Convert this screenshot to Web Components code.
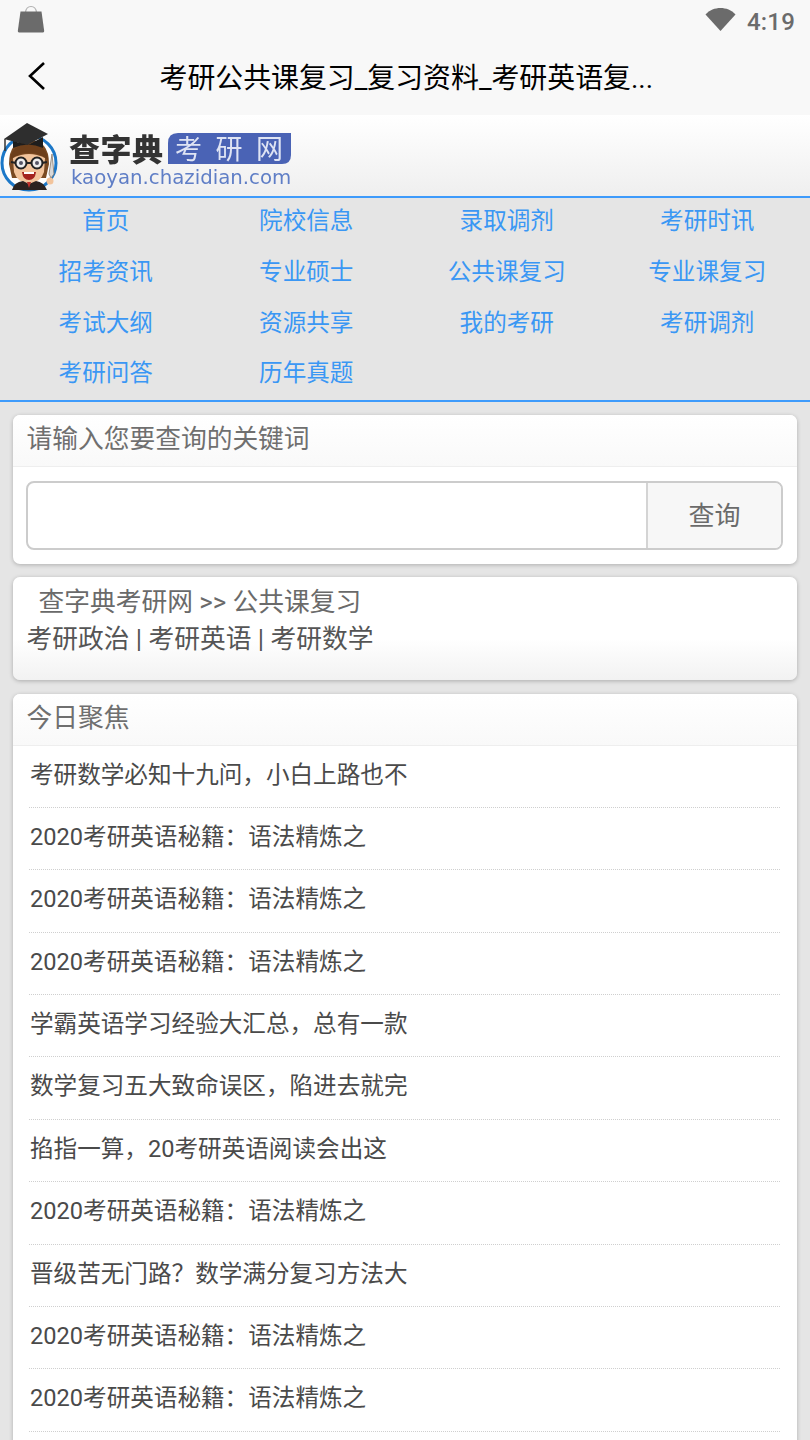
<!DOCTYPE html>
<html lang="zh">
<head>
<meta charset="utf-8">
<title>考研公共课复习</title>
<style>
  html, body { margin: 0; padding: 0; height: 1440px; overflow: hidden; }
  body {
    background: #e5e5e5;
    font-family: Roboto, "Noto Sans CJK SC", sans-serif;
    font-size: 23.6px;
  }
</style>
</head>
<body>
<app-bar title="考研公共课复习_复习资料_考研英语复..."></app-bar>
<logo-header></logo-header>
<nav-grid>
  <a>首页</a><a>院校信息</a><a>录取调剂</a><a>考研时讯</a>
  <a>招考资讯</a><a>专业硕士</a><a>公共课复习</a><a>专业课复习</a>
  <a>考试大纲</a><a>资源共享</a><a>我的考研</a><a>考研调剂</a>
  <a>考研问答</a><a>历年真题</a>
</nav-grid>
<main-column>
  <info-card heading="请输入您要查询的关键词"><search-box></search-box></info-card>
  <crumb-card>
    <div class="first">查字典考研网 &gt;&gt; 公共课复习</div>
    <div class="second">考研政治 | 考研英语 | 考研数学</div>
  </crumb-card>
  <info-card heading="今日聚焦">
    <list-row>考研数学必知十九问，小白上路也不</list-row>
    <list-row>2020考研英语秘籍：语法精炼之</list-row>
    <list-row>2020考研英语秘籍：语法精炼之</list-row>
    <list-row>2020考研英语秘籍：语法精炼之</list-row>
    <list-row>学霸英语学习经验大汇总，总有一款</list-row>
    <list-row>数学复习五大致命误区，陷进去就完</list-row>
    <list-row>掐指一算，20考研英语阅读会出这</list-row>
    <list-row>2020考研英语秘籍：语法精炼之</list-row>
    <list-row>晋级苦无门路？数学满分复习方法大</list-row>
    <list-row>2020考研英语秘籍：语法精炼之</list-row>
    <list-row>2020考研英语秘籍：语法精炼之</list-row>
    <list-row></list-row>
  </info-card>
</main-column>

<script>
const define = (name, html) => {
  customElements.define(name, class extends HTMLElement {
    constructor() {
      super();
      this.attachShadow({mode: 'open'}).innerHTML = html;
    }
    connectedCallback() {
      const t = this.shadowRoot.querySelector('[data-title]');
      if (t) t.textContent = this.getAttribute('title') || this.getAttribute('heading') || '';
    }
  });
};

define('app-bar', `
  <style>
    :host { display: block; height: 115px; background: #f8f8f8; }
    .status { height: 43px; display: flex; align-items: center; padding: 0 15px 0 17px; }
    .status svg { display: block; margin-top: -6px; }
    .wifi { margin-left: auto; margin-right: 11px; }
    .time { color: #6b6b6b; font: 500 24px Roboto, sans-serif; letter-spacing: .2px; }
    .bar { height: 72px; display: flex; align-items: center; position: relative; }
    .back { margin-left: 26px; display: block; margin-top: -6px; }
    .title {
      position: absolute; left: 159.5px; top: 16px;
      color: #000; font-size: 27.9px; line-height: 40px;
      white-space: nowrap;
    }
  </style>
  <div class="status">
    <svg class="bag" width="28" height="28" viewBox="0 0 28 28">
      <path d="M8.5 7.5C9 3 11 1.5 14 1.5S19 3 19.5 7.5" fill="none" stroke="#b0b0b0" stroke-width="1.2"/>
      <path d="M3.5 6.5h21l2.7 19.6q.1 1.4-1.2 1.4H2q-1.3 0-1.2-1.4z" fill="#6b6b6b"/>
    </svg>
    <svg class="wifi" width="31" height="24" viewBox="0 0 31 24">
      <path d="M0.5 7.5C4.5 3 10 1 15.5 1S26.5 3 30.5 7.5L15.5 24z" fill="#6b6b6b"/>
    </svg>
    <span class="time">4:19</span>
  </div>
  <div class="bar">
    <svg class="back" width="20" height="32" viewBox="0 0 20 32">
      <path d="M18 3L4 16l14 13" fill="none" stroke="#000" stroke-width="2.6"/>
    </svg>
    <div class="title" data-title></div>
  </div>
`);

define('logo-header', `
  <style>
    :host {
      display: block; height: 81px; box-sizing: border-box; padding-top: 5px;
      background: linear-gradient(#fff, #efefef);
    }
    svg { display: block; filter: blur(.5px); }
    text { font-family: "Noto Sans CJK SC", sans-serif; }
    .url { font-family: "DejaVu Sans", sans-serif; }
  </style>
  <svg width="295" height="72" viewBox="0 0 295 72">
    <circle cx="29" cy="43" r="27" fill="#fff" stroke="#1c78c8" stroke-width="3"/>
    <path d="M9 44q0-24 20-24t20 24l-3 14H12z" fill="#7a4a22"/>
    <path d="M13 38q16-8 32 0l-1 14q-3 10-15 12q-12-2-15-12z" fill="#f2c49c"/>
    <path d="M10 40q1-15 19-16q18 1 19 16q-9-8-19-7q-10-1-19 7z" fill="#6d3f1b"/>
    <circle cx="21" cy="43" r="5.5" fill="#eee" stroke="#222" stroke-width="2"/>
    <circle cx="37" cy="43" r="5.5" fill="#eee" stroke="#222" stroke-width="2"/>
    <path d="M26 43h6M11 42l5 1M42 43l5-1" stroke="#222" stroke-width="2"/>
    <circle cx="21" cy="43" r="2" fill="#556"/><circle cx="37" cy="43" r="2" fill="#556"/>
    <path d="M22 52h14q-1 8-7 8t-7-8z" fill="#a3231f"/>
    <path d="M24 52h10v2h-10z" fill="#fff"/>
    <path d="M12 70q2-8 11-9l6 3 7-3q8 1 11 9z" fill="#2b2320"/>
    <path d="M27 62h4l-2 6z" fill="#c0302a"/>
    <path d="M52 34l2 20-3 4-2-4z" fill="#d9d9d9" stroke="#8a7a6a" stroke-width=".8"/>
    <circle cx="50" cy="61" r="3.5" fill="#f2c49c"/>
    <path d="M4 19L27 3l21 11-21 11z" fill="#2e2e2e"/>
    <path d="M13 21v7q15-7 30 0v-11l-15 8z" fill="#1d1d1d"/>
    <path d="M5 19v12" stroke="#333" stroke-width="1.5"/>
    <text x="69" y="41" font-size="31" font-weight="900" fill="#333" textLength="94">查字典</text>
    <path d="M178 13h113v22q0 9-9 9h-114V23q0-10 10-10z" fill="#4a63b5"/>
    <text x="175" y="39" font-size="27" fill="#dfe4f4" textLength="108">考 研 网</text>
    <text class="url" x="71" y="63.5" font-size="19.75" fill="#5f7ec6">kaoyan.chazidian.com</text>
  </svg>
`);

define('nav-grid', `
  <style>
    :host {
      display: grid; grid-template-columns: repeat(4, 200.5px);
      grid-auto-rows: 50.7px; align-items: center; justify-items: center;
      box-sizing: border-box; height: 206px; padding-left: 5.5px;
      background: #e5e5e5;
      border-top: 2px solid #3e9bfb; border-bottom: 2px solid #3e9bfb;
    }
    ::slotted(a) { color: #3a97f4; font-size: 23.6px; line-height: 32px; margin-bottom: 4px; }
  </style>
  <slot></slot>
`);

define('main-column', `
  <style>
    :host { display: flex; flex-direction: column; gap: 13.5px; padding: 13px 13px 0; }
  </style>
  <slot></slot>
`);

define('info-card', `
  <style>
    :host {
      display: block; background: #fff; border-radius: 7px;
      box-shadow: 0 1px 4px rgba(0,0,0,.24);
      overflow: hidden;
    }
    .head {
      height: 52px; box-sizing: border-box; padding-left: 13.5px;
      background: linear-gradient(#fff, #f9f9f9);
      border-bottom: 1px solid #eee;
      color: #6f6f6f; font-size: 25.74px; line-height: 49px;
    }
  </style>
  <div class="head" data-title></div>
  <slot></slot>
`);

define('search-box', `
  <style>
    :host { display: flex; height: 69px; margin: 14px 14px 13.5px 13px; box-sizing: border-box;
      border: 2px solid #cccccc; border-radius: 8px; overflow: hidden; background: #fff; }
    .field { flex: 1; border-right: 2px solid #d4d4d4; }
    .go { width: 133px; padding-bottom: 4px; box-sizing: border-box; background: #f7f7f7; display: flex;
      align-items: center; justify-content: center; color: #6b6b6b; font-size: 26px; }
  </style>
  <div class="field"></div>
  <div class="go">查询</div>
`);

define('crumb-card', `
  <style>
    :host {
      display: block; height: 103px; box-sizing: border-box; padding: 6.5px 13.5px 0;
      background: linear-gradient(#fff 60%, #f2f2f2);
      border-radius: 7px; box-shadow: 0 1px 4px rgba(0,0,0,.26);
      font-size: 25.74px; line-height: 37px;
    }
    ::slotted(div) { white-space: nowrap; }
    ::slotted(.first) { padding-left: 12px; color: #6a6a6a; }
    ::slotted(.second) { color: #555; }
  </style>
  <slot></slot>
`);

define('list-row', `
  <style>
    :host { display: block; height: 62.4px; box-sizing: border-box; margin: 0 17px 0 16px;
      border-bottom: 1px dotted #cfcfcf; padding-left: 1px;
      color: #4a4a4a; font-size: 23.6px; line-height: 59px; white-space: nowrap; }
  </style>
  <slot></slot>
`);
</script>
</body>
</html>
